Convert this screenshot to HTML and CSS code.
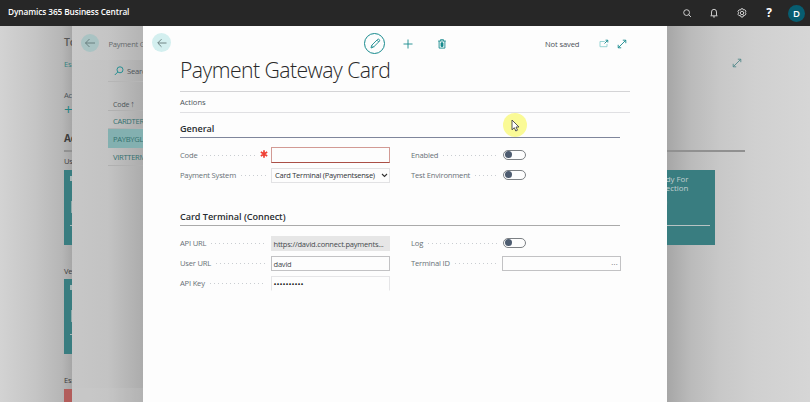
FILE: index.html
```html
<!DOCTYPE html>
<html lang="en">
<head>
<meta charset="utf-8">
<title>Payment Gateway Card</title>
<link rel="stylesheet" href="styles.css">
</head>
<body>
<header class="topbar">
  <span class="brand">Dynamics 365 Business Central</span>
  <nav class="topicons">
    <svg width="10" height="10" viewBox="0 0 10 10"><circle cx="4.6" cy="4.6" r="2.9"/><path d="M6.7 6.7 9 9"/></svg>
    <svg width="10" height="10" viewBox="0 0 10 10"><path d="M1.5 7.8h7M2.5 7.6V4a2.5 2.7 0 0 1 5 0v3.6M4 8.9h2"/></svg>
    <svg width="10" height="10" viewBox="0 0 10 10"><circle cx="5" cy="5" r="1.7"/><path d="M4 .8h2l.5 1.2 1.3-.3 1.2 1.5-.8 1 .8 1.7-1.1 1.5-1.4-.1L6 9H4l-.6-1.5-1.5.1L.9 6.2l.8-1.4-.8-1.5 1.2-1.5 1.4.3z"/></svg>
    <span class="help">?</span>
    <span class="avatar">D</span>
  </nav>
</header>
<div class="stage">
  <main class="home">
    <div class="home-top"><h2>Today</h2>
      <svg class="expand" width="10" height="10" viewBox="0 0 10 10"><path d="M1.2 8.8 8.8 1.2M5.8 1.2h3v3M1.2 5.8v3h3"/></svg>
    </div>
    <div class="home-link">Essentials</div>
    <div class="home-actions">Actions</div>
    <div class="home-plus">+</div>
    <h3>Activities</h3>
    <div class="group">Users</div>
    <div class="tiles">
      <div class="tile"><span class="mark"></span><span class="mark tall"></span><span class="mark line"></span></div>
      <div class="tile ready">Ready For<br>Collection<b class="count">0</b><i class="rule"></i></div>
    </div>
    <div class="group second">Vendors</div>
    <div class="tiles"><div class="tile"><span class="mark"></span><span class="mark tall"></span><span class="mark line"></span></div></div>
    <div class="group third">Essentials</div>
    <div class="tile red"></div>
  </main>
  <section class="list">
    <div class="list-head">
      <span class="back"><svg width="12" height="10" viewBox="0 0 12 10"><path d="M11 5H1.5M5.5 1 1.5 5l4 4"/></svg></span>
      <span>Payment Gateways</span>
    </div>
    <div class="list-search"><svg width="10" height="10" viewBox="0 0 10 10"><circle cx="6" cy="3.8" r="3"/><path d="M3.8 6 .8 9"/></svg><span>Search</span></div>
    <div class="list-col">Code <span class="sort">↑</span></div>
    <div class="row">CARDTERM</div>
    <div class="row selected">PAYBYGL</div>
    <div class="row">VIRTTERM</div>
    <div class="list-foot"></div>
  </section>
  <section class="card">
    <div class="toolbar">
      <span class="back"><svg width="12" height="10" viewBox="0 0 12 10"><path d="M10.5 5H2M5.5 1.2 1.7 5l3.8 3.8"/></svg></span>
      <span class="edit"><svg width="12" height="12" viewBox="0 0 12 12"><path d="m2 10 .7-2.7 6-6c1-.7 2.5.7 1.8 1.8l-6 6zM2.9 7.4l1.8 1.8M8 2.2 9.8 4"/></svg></span>
      <svg class="add" width="10" height="10" viewBox="0 0 10 10"><path d="M5 .5v9M.5 5h9"/></svg>
      <svg class="trash" width="8" height="10" viewBox="0 0 8 10"><path d="M.2 2h7.6M2.5 1.8V.7h3v1.1M1.1 2v7.1h5.8V2"/><path class="solid" d="M3 3.8h2v3.6H3z"/></svg>
      <span class="status">Not saved</span>
      <svg class="popout" width="10" height="10" viewBox="0 0 10 10"><path class="pale" d="M5.8 2.5H1v5.2h7V5"/><path d="m5.5 4.5 3.3-3.3M6.5 1.2h2.3v2.3"/></svg>
      <svg class="full" width="10" height="10" viewBox="0 0 10 10"><path d="M1.2 8.8 8.8 1.2M5.8 1.2h3v3M1.2 5.8v3h3"/></svg>
    </div>
    <h1>Payment Gateway Card</h1>
    <div class="actions">Actions</div>
    <h4>General</h4>
    <div class="fields general">
      <div class="field"><label>Code</label><i class="dots"></i><svg class="star" width="8" height="8" viewBox="0 0 8 8"><path d="M4 .3v7.4M.8 2.1l6.4 3.8M7.2 2.1.8 5.9"/></svg><span class="box error"></span></div>
      <div class="field right"><label>Enabled</label><i class="dots"></i><span class="toggle"></span></div>
      <div class="field"><label>Payment System</label><i class="dots"></i><span class="box select">Card Terminal (Paymentsense)<svg width="7" height="5" viewBox="0 0 7 5"><path d="m1 1 2.5 2.5L6 1"/></svg></span></div>
      <div class="field right"><label>Test Environment</label><i class="dots"></i><span class="toggle"></span></div>
    </div>
    <h4 class="connect">Card Terminal (Connect)</h4>
    <div class="fields">
      <div class="field"><label>API URL</label><i class="dots"></i><span class="box readonly">https://david.connect.payments...</span></div>
      <div class="field right"><label>Log</label><i class="dots"></i><span class="toggle"></span></div>
      <div class="field"><label>User URL</label><i class="dots"></i><span class="box">david</span></div>
      <div class="field right"><label>Terminal ID</label><i class="dots"></i><span class="box lookup">···</span></div>
      <div class="field"><label>API Key</label><i class="dots"></i><span class="box faint">••••••••••</span></div>
    </div>
    <span class="pointer"><svg width="9" height="13" viewBox="0 0 9 13"><path d="M1 1v9.8l2.3-2.1 1.5 3.3 1.7-.8L5 8h3z"/></svg></span>
  </section>
</div>
</body>
</html>
```
FILE: styles.css
```css
* { box-sizing: border-box; }
body { margin: 0; width: 810px; height: 402px; overflow: hidden; font-family: "Open Sans", "Noto Sans", sans-serif; font-size: 7.6px; letter-spacing: -.2px; line-height: 10px; color: #4c5358; }
h1, h2, h3, h4 { margin: 0; }
i { font-style: normal; }
svg { display: block; flex: none; fill: none; stroke: #168a8d; stroke-width: .9; }

.topbar { height: 26px; background: #272727; display: flex; align-items: center; justify-content: space-between; padding: 0 5px 0 8px; color: #fff; }
.brand { font-size: 8.3px; font-weight: 600; letter-spacing: -.1px; white-space: nowrap; padding-bottom: 2px; }
.topicons { display: flex; align-items: center; }
.topicons svg { stroke: #ddd; margin-right: 17.3px; }
.help { width: 10px; font-size: 12px; font-weight: 700; text-align: center; margin-right: 14px; }
.avatar { width: 17px; height: 17px; border-radius: 50%; background: #075d70; font-size: 9.5px; line-height: 17px; font-weight: 600; text-align: center; }

.stage { position: relative; height: 376px; overflow: hidden; background: linear-gradient(90deg, #d3d3d3 0, #c5c5c5 35px, #b6b6b6 62px, #a6a6a6 72px, #a6a6a6 667px, #bababa 690px, #c8c8c8 720px, #d0d0d0 755px, #d6d6d6 810px); }
.home { padding: 8px 65px 0 64px; white-space: nowrap; }
.home-top { display: flex; justify-content: space-between; height: 25px; }
.home-top h2 { font-size: 10.5px; line-height: 16px; font-weight: 600; color: #555; }
.expand { margin: 24px 3px 0 0; stroke: #52898b; }
.home-link { color: #35817f; height: 31px; }
.home-actions { height: 10px; }
.home-plus { color: #258484; font-size: 15px; line-height: 19px; height: 28px; }
.home h3 { height: 24px; font-size: 10px; line-height: 21px; color: #3c3c3c; border-bottom: 2px solid #909090; }
.group { height: 18px; padding-top: 4px; color: #3c3c3c; }
.second { height: 34px; padding-top: 21px; }
.third { height: 35px; padding-top: 21px; }
.tiles { display: flex; justify-content: space-between; padding-right: 30px; height: 75px; }
.tile { width: 75px; height: 75px; background: #397d80; padding: 6px; color: #c1d0d0; }
.mark { display: block; width: 3px; height: 5px; background: #a9b9b9; }
.tall { height: 12px; margin: 20px 0 0 1px; background: #8fabab; }
.line { height: 1px; margin-top: 12px; }
.ready { padding: 5px 5px 0 12px; font-size: 7.9px; letter-spacing: 0; line-height: 8.5px; }
.count { display: block; font-weight: 300; font-size: 13px; line-height: 18px; margin-left: 8px; margin-top: 1px; }
.rule { display: block; height: 1px; background: #b8c3c3; margin: 14px 0 0 -8px; }
.red { background: #b25d5b; }

.list { position: absolute; left: 72px; top: 0; width: 590px; height: 376px; background: linear-gradient(90deg, #c7c7c7, #c3c3c3 36px, #acacac 71px); white-space: nowrap; display: flex; flex-direction: column; }
.list-head { height: 34px; background: linear-gradient(90deg, #cacaca, #c5c5c5 36px, #b4b4b4 71px); display: flex; align-items: center; gap: 9.5px; padding: 2px 0 0 9px; font-size: 7.6px; letter-spacing: -.25px; color: #65696b; }
.back { width: 18px; height: 18px; border-radius: 50%; background: #a9c3c3; display: flex; align-items: center; justify-content: center; }
.list-head .back { margin-top: -2px; }
.back svg { stroke: #637879; }
.list-search { display: flex; gap: 3px; align-items: center; height: 21px; margin-left: 42px; }
.list-col { height: 30px; padding: 17px 0 0 5px; margin-left: 36px; border-top: 1px solid #b5b5b5; border-bottom: 1px solid #b0b0b0; font-size: 7px; letter-spacing: -.1px; }
.sort { font-size: 9px; margin-left: -1px; }
.row { height: 18px; margin-left: 36px; padding-left: 5px; line-height: 20px; color: #35706f; letter-spacing: -.3px; border-bottom: 1px solid #b0b0b0; }
.selected { background: #83b0b0; border: 0; height: 19px; }
.selected + .row { line-height: 18px; }
.list-foot { margin-top: auto; height: 14px; background: #cdcdcd30; }

.card { position: absolute; left: 143px; top: 0; width: 524px; height: 376px; background: #fdfdfd; padding: 0 37px; white-space: nowrap; }
.toolbar { height: 31px; margin: 0 -27px; padding-top: 4px; display: flex; align-items: center; }
.card .back { margin: -2px 193px 0 -1px; width: 19px; height: 19px; background: #d3efef; }
.edit { width: 21px; height: 21px; border: 1px solid #168a8d; border-radius: 50%; display: flex; align-items: center; justify-content: center; margin: 0 18px 0 0; }
.add { margin-right: 25px; }
.status { margin-left: 99px; width: 35px; margin-right: 18.5px; font-size: 7.6px; letter-spacing: -.13px; padding-top: 1px; }
.popout { margin-right: 8px; }
.pale { stroke: #8dcfcf; }
.solid { fill: #168a8d; }
.card h1 { height: 34px; font-size: 21.2px; letter-spacing: -.54px; line-height: 26px; font-weight: 300; color: #282828; }
.actions { height: 22px; border-top: 1px solid #d4d4d6; border-bottom: 1px solid #e0e0e3; line-height: 21px; letter-spacing: -.05px; }
.card h4 { height: 25px; width: 440px; padding-top: 10px; font-size: 9.1px; letter-spacing: -.04px; line-height: 11px; font-weight: 600; color: #292d31; border-bottom: 1px solid #7f869b; }
.card .connect { margin-top: 5px; border-color: #aaa; }
.fields { display: grid; grid-template-columns: 209.5px 210px; column-gap: 21.5px; grid-auto-rows: 20.2px; padding-top: 7px; }
.general { height: 58px; }
.field { display: flex; align-items: center; color: #687177; }
.dots { flex: 1; height: 1px; margin: 1px 5px 0 5px; background: repeating-linear-gradient(90deg, #c9cdd1 0 1px, transparent 1px 4px); }
.star { stroke: #ef4034; stroke-width: 1.7; margin: -3px 3px 0 0; }
.box { width: 119px; height: 15px; border: 1px solid #c2c2c4; line-height: 14px; padding: 0 2px; color: #45494d; font-size: 7.5px; letter-spacing: -.2px; }
.error { border-color: #d29a94; border-bottom-color: #aa4f46; height: 16px; }
.select { border-color: #e2e2e4; display: flex; align-items: center; justify-content: space-between; padding: 0 1px 0 3.5px; letter-spacing: -.25px; color: #303438; }
.select svg { stroke: #333; stroke-width: 1.1; }
.readonly { background: #e6e6e6; border-color: #e6e6e6; }
.lookup { text-align: right; letter-spacing: .3px; }
.faint { border-color: #e5e5e7; border-bottom-color: transparent; font-size: 8px; letter-spacing: 0; color: #222; }
.toggle { width: 23px; height: 10px; border: 1px solid #7c8084; border-radius: 5px; margin-right: 95.5px; margin-top: -1px; display: flex; align-items: center; padding-left: 1px; }
.toggle::before { content: ""; width: 7px; height: 7px; border-radius: 50%; background: #4d5c70; }
.pointer { position: absolute; left: 360px; top: 87px; width: 24px; height: 24px; border-radius: 50%; background: #fafa96; display: flex; align-items: center; justify-content: center; }
.pointer svg { stroke: #444; fill: #fff; }
```
